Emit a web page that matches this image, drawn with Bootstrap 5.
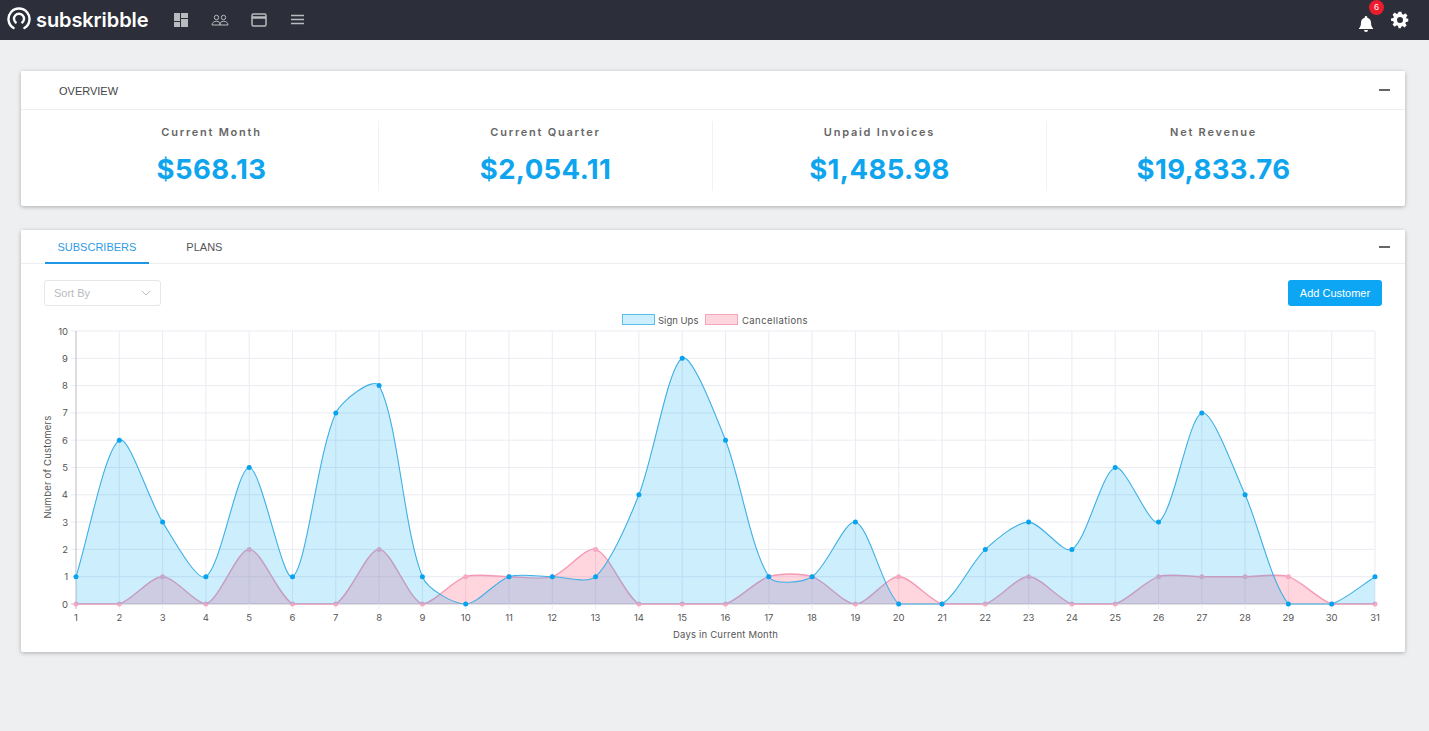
<!DOCTYPE html>
<html lang="en">
<head>
<meta charset="utf-8">
<title>Subskribble</title>
<link href="https://cdn.jsdelivr.net/npm/bootstrap@5.3.0/dist/css/bootstrap.min.css" rel="stylesheet">
<style>
body{background:#eeeff1;font-family:"Liberation Sans",Arial,sans-serif;color:#555;min-height:731px;overflow:hidden}
.topbar{height:40px;background:#2c2e3a;padding:0 20px 0 7px}
.brand-mark{width:24px;height:24px;display:block;margin-bottom:5px}
.brand-word{font-family:Inter,sans-serif;font-weight:600;font-size:20px;line-height:24px;letter-spacing:-.1px;color:#fff;margin-left:5px;width:136px}
.nav-glyph{width:20px;height:20px;display:block}
.glyph-gap{gap:19px;margin-left:-1px}
.note-wrap{position:relative;width:18px;height:18px;margin-right:16px}
.note-count{position:absolute;left:12px;top:-11px;width:15px;height:15px;border-radius:50%;background:#ec1c2d;color:#fff;font-size:9px;line-height:15px;text-align:center}
.page-wrap{padding:31px 24px 0 21px}
.sheet{border:0;border-radius:2px;background:#fff;box-shadow:0 1px 4px rgba(0,0,0,.28)}
.sheet-first{height:135px;margin-bottom:24px}
.sheet-second{height:422px}
.sheet-head{height:39px;padding:0 15px 0 38px;background:#fff;border-bottom:1px solid #eceef1;font-size:11px;color:#444}
.head-label{position:relative;top:1px}
.sheet-second .sheet-head{height:34px;padding-left:24px}
.fold-bar{width:11px;height:2px;background:#666;display:block}
.stat-row{margin:11px 25px 0 24px;height:70px}
.stat-cell{flex:1 1 0;text-align:center;border-right:1px solid #f1f2f4}
.stat-cell:last-child{border-right:0}
.stat-name{font-family:Inter,sans-serif;font-weight:600;font-size:11px;letter-spacing:1.75px;color:#666;line-height:14px;margin-top:4px}
.stat-value{font-family:Inter,sans-serif;font-weight:700;font-size:27.5px;letter-spacing:.4px;color:#0ea5ee;line-height:36px;margin-top:12px}
.tab-strip{border:0;gap:25px;height:34px}
.tab-strip .nav-link{border:0;border-radius:0;height:34px;line-height:34px;padding:0 12.5px;font-size:11px;color:#555;background:none}
.tab-strip .nav-link.active{color:#2e9be6;border-bottom:2px solid #2196e3;background:none}
.tool-row{padding:16px 23px 0 23px}
.sort-select{width:117px;height:26px;padding:0 9px;font-size:11px;line-height:24px;color:#b9bbbf;border:1px solid #e4e6e9;border-radius:3px;background:#fff}
.add-btn{width:94px;height:26px;padding:0;font-size:11px;line-height:26px;border:0;border-radius:3px;background:#0ca6f5;color:#fff}
.chart-area{display:block;width:1384px;height:335px;margin-top:6px}
.chart-area text{font-family:Inter,sans-serif;font-size:9.5px;fill:#555}
.chart-area .title-text{letter-spacing:.2px}
.chart-area .legend-wide{letter-spacing:.42px}
</style>
</head>
<body>
<nav class="navbar topbar d-flex justify-content-between align-items-center flex-nowrap">
  <div class="d-flex align-items-center">
    <svg class="brand-mark" viewBox="0 0 24 24" fill="none" stroke="#fff" stroke-linecap="round">
      <path d="M6.600 22A10.500 10.500 0 1 1 17.400 22" stroke-width="2.400"/>
      <path d="M8.700 16.500A5 5 0 1 1 15.300 16.500" stroke-width="2.400"/>
    </svg>
    <span class="brand-word">subskribble</span>
    <div class="d-flex align-items-center glyph-gap">
      <svg class="nav-glyph" viewBox="0 0 20 20" fill="#b9bbbf"><rect x="3" y="3" width="6" height="8"/><rect x="10" y="3" width="7" height="5"/><rect x="3" y="12" width="6" height="5"/><rect x="10" y="9" width="7" height="8"/></svg>
      <svg class="nav-glyph" viewBox="0 0 20 20" fill="none" stroke="#b9bbbf" stroke-width="1"><circle cx="6.500" cy="7.500" r="2.200"/><circle cx="13.500" cy="7.500" r="2.200"/><path d="M2 15c0-2.500 2-3.700 4.500-3.700S10 12.500 10 15zM10 15c0-2.500 1-3.700 3.500-3.700S18 12.500 18 15z"/></svg>
      <svg class="nav-glyph" viewBox="0 0 20 20" fill="none" stroke="#b9bbbf" stroke-width="1.500"><rect x="3" y="4" width="14" height="12" rx="1.500"/><path d="M3 7.500h14" stroke-width="2.500"/></svg>
      <svg class="nav-glyph" viewBox="0 0 20 20" fill="none" stroke="#b9bbbf" stroke-width="1.300"><path d="M3 5.500h13M3 9.500h13M3 13.500h13"/></svg>
    </div>
  </div>
  <div class="d-flex align-items-center">
    <div class="note-wrap">
      <svg width="18" height="18" viewBox="0 0 18 18" fill="#fff"><path d="M9 1a1.300 1.300 0 0 1 1.300 1.300v.4C12.700 3.300 14 5.300 14 7.500c0 3.600 1 4.800 2 5.700v.8H2v-.8c1-.9 2-2.100 2-5.700 0-2.200 1.300-4.200 3.700-4.800v-.4A1.300 1.300 0 0 1 9 1zM7 15h4a2 2 0 0 1-4 0z"/></svg>
      <span class="note-count">6</span>
    </div>
    <svg width="18" height="18" viewBox="0 0 24 24" fill="#fff"><path fill-rule="evenodd" d="M10 1h4l.6 3.100 1.900.8 2.600-1.800 2.800 2.800-1.800 2.600.8 1.900L23 10v4l-3.100.6-.8 1.900 1.800 2.600-2.800 2.800-2.600-1.800-1.900.8L13 23h-3l-.6-3.100-1.900-.8-2.600 1.800-2.800-2.800 1.800-2.600-.8-1.900L0 13v-3l3.100-.6.800-1.900-1.800-2.600 2.800-2.800 2.600 1.800 1.900-.8zM12 8a4 4 0 1 0 0 8 4 4 0 0 0 0-8z"/></svg>
  </div>
</nav>

<main class="page-wrap">
  <section class="card sheet sheet-first">
    <div class="sheet-head d-flex justify-content-between align-items-center">
      <span class="head-label">OVERVIEW</span><span class="fold-bar"></span>
    </div>
    <div class="d-flex stat-row">
      <div class="stat-cell"><div class="stat-name">Current Month</div><div class="stat-value">$568.13</div></div>
      <div class="stat-cell"><div class="stat-name">Current Quarter</div><div class="stat-value">$2,054.11</div></div>
      <div class="stat-cell"><div class="stat-name">Unpaid Invoices</div><div class="stat-value">$1,485.98</div></div>
      <div class="stat-cell"><div class="stat-name">Net Revenue</div><div class="stat-value">$19,833.76</div></div>
    </div>
  </section>

  <section class="card sheet sheet-second">
    <div class="sheet-head d-flex justify-content-between align-items-center">
      <ul class="nav tab-strip">
        <li class="nav-item"><a class="nav-link active" href="#">SUBSCRIBERS</a></li>
        <li class="nav-item"><a class="nav-link" href="#">PLANS</a></li>
      </ul>
      <span class="fold-bar"></span>
    </div>
    <div class="d-flex justify-content-between tool-row">
      <div class="sort-select d-flex justify-content-between align-items-center">
        <span>Sort By</span>
        <svg width="10" height="6" viewBox="0 0 10 6" fill="none" stroke="#b9bbbf"><path d="M1 1l4 4 4-4"/></svg>
      </div>
      <button type="button" class="btn add-btn">Add Customer</button>
    </div>
    <svg id="chart" class="chart-area" viewBox="21 312 1384 335"></svg>
  </section>
</main>

<script>
(function(){
  var ups=[1,6,3,1,5,1,7,8,1,0,1,1,1,4,9,6,1,1,3,0,0,2,3,2,5,3,7,4,0,0,1];
  var cancels=[0,0,1,0,2,0,0,2,0,1,1,1,2,0,0,0,1,1,0,1,0,0,1,0,0,1,1,1,1,0,0];
  var L=76,R=1375,T=331,B=604,sx=(R-L)/30,sy=(B-T)/10,TENSION=.28;
  var svg=document.getElementById('chart');
  function el(n,a,t){var e=document.createElementNS('http://www.w3.org/2000/svg',n);for(var k in a)e.setAttribute(k,a[k]);if(t!==undefined)e.textContent=t;svg.appendChild(e);return e;}
  var i;
  for(i=0;i<=10;i++){var y=B-i*sy;
    el('line',{x1:71,x2:R,y1:y,y2:y,stroke:i==0?'#c4c4c8':'#ebebf2','stroke-width':1});
    el('text',{x:68,y:y+3.5,'text-anchor':'end'},String(i));}
  for(i=0;i<31;i++){var x=L+i*sx;
    el('line',{x1:x,x2:x,y1:T,y2:B+5,stroke:i==0?'#bdbdc2':'#ebebf2','stroke-width':1});
    el('text',{x:x,y:621,'text-anchor':'middle'},String(i+1));}
  el('text',{x:725.5,y:638,'text-anchor':'middle','class':'title-text'},'Days in Current Month');
  el('text',{transform:'translate(51,467) rotate(-90)','text-anchor':'middle','class':'title-text'},'Number of Customers');
  el('rect',{x:622.5,y:314.5,width:32,height:10,fill:'rgba(3,169,244,.2)',stroke:'#58bfeb','stroke-width':1});
  el('text',{x:658,y:324},'Sign Ups');
  el('rect',{x:705.5,y:314.5,width:32,height:10,fill:'rgba(255,99,132,.27)',stroke:'#f5a3b8','stroke-width':1});
  el('text',{x:742,y:324,'class':'legend-wide'},'Cancellations');
  function clamp(v,a,b){return Math.max(a,Math.min(b,v));}
  function series(data,fill,line,width,dot){
    var p=data.map(function(v,i){return {x:L+i*sx,y:B-v*sy};});
    p.forEach(function(c,i){
      var a=p[i-1]||c,b=p[i+1]||c;
      var d1=Math.hypot(c.x-a.x,c.y-a.y),d2=Math.hypot(b.x-c.x,b.y-c.y),s=d1+d2||1;
      var f1=TENSION*d1/s,f2=TENSION*d2/s;
      c.px=clamp(c.x-f1*(b.x-a.x),L,R);c.py=clamp(c.y-f1*(b.y-a.y),T,B);
      c.nx=clamp(c.x+f2*(b.x-a.x),L,R);c.ny=clamp(c.y+f2*(b.y-a.y),T,B);
    });
    var d='M'+p[0].x+' '+p[0].y;
    for(var i=1;i<p.length;i++){d+='C'+p[i-1].nx+' '+p[i-1].ny+' '+p[i].px+' '+p[i].py+' '+p[i].x+' '+p[i].y;}
    el('path',{d:d+'L'+R+' '+B+'L'+L+' '+B+'Z',fill:fill,stroke:'none'});
    el('path',{d:d,fill:'none',stroke:line,'stroke-width':width});
    p.forEach(function(c){el('circle',{cx:c.x,cy:c.y,r:2.5,fill:dot});});
  }
  series(cancels,'rgba(255,99,132,.27)','#f59ab5',1.4,'#f7a8c2');
  series(ups,'rgba(3,169,244,.2)','#3eb0e5',1.1,'#07a3ee');
})();
</script>
<script src="https://cdn.jsdelivr.net/npm/bootstrap@5.3.0/dist/js/bootstrap.bundle.min.js"></script>
</body>
</html>
